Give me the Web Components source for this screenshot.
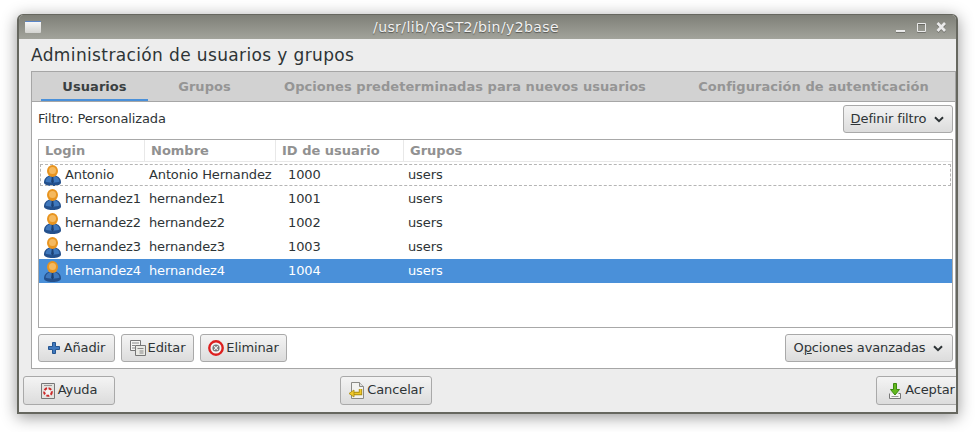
<!DOCTYPE html>
<html>
<head>
<meta charset="utf-8">
<style>
  html, body { margin: 0; background: #fff; height: 432px; overflow: hidden; }
  body { font: 13px "DejaVu Sans", sans-serif; color: #2e3436; }
</style>
</head>
<body>
<yast-window>
  <span slot="title">/usr/lib/YaST2/bin/y2base</span>
  <user-panel></user-panel>
</yast-window>

<script>
const ICONS = {
  user: `<svg width="17" height="21" viewBox="0 0 17 21">
    <path d="M0 17.500c0-4 2.500-6 5.500-7h6c3 1 5.500 3 5.500 7 0 2-3.500 3.500-8.500 3.500S0 19.500 0 17.500z" fill="#24508c"/>
    <path d="M1.500 16.500c0-2.500 2-4.500 4.500-5.500h5c2.500 1 4.500 3 4.500 5.500-1.500 1.500-12.500 1.500-14 0z" fill="#3f78bd"/>
    <path d="M6.800 10.500h3.400l-.9 2 .6 4.500-1.400 1.500L7.100 17l.6-4.500z" fill="#1c4174"/>
    <ellipse cx="8.500" cy="6" rx="5.500" ry="6" fill="#e8941f"/>
    <circle cx="8.500" cy="5.500" r="3.500" fill="#f5b95f"/>
  </svg>`,
  add: `<svg width="12" height="12" viewBox="0 0 12 12">
    <path d="M4.500.500h3v4h4v3h-4v4h-3v-4h-4v-3h4z" fill="#3f78bd" stroke="#255590" stroke-linejoin="round"/>
  </svg>`,
  edit: `<svg width="16" height="16" viewBox="0 0 16 16">
    <path d="M.5.500h10v10H.5z" fill="#f6f6f4" stroke="#777"/>
    <path d="M5.500 5.500h10v10h-10z" fill="#e9e9e4" stroke="#777"/>
    <path d="M2 3h7M2 5.500h3M2 8h3M7.500 8.500h6M9.500 11h4M9.500 13h4" stroke="#888"/>
  </svg>`,
  remove: `<svg width="16" height="16" viewBox="0 0 16 16">
    <circle cx="8" cy="8" r="6.700" fill="#f2f2f2" stroke="#dd1f1f" stroke-width="2.400"/>
    <circle cx="8" cy="8" r="3.600" fill="#777"/>
    <path d="M6.200 6.200l3.600 3.600M9.800 6.200l-3.600 3.600" stroke="#f2f2f2" stroke-width="1.200"/>
  </svg>`,
  help: `<svg width="14" height="16" viewBox="0 0 14 16">
    <path d="M.5.500h13v15H.5z" fill="#e4e4e0" stroke="#777"/>
    <path d="M3 2.500h8" stroke="#999"/>
    <circle cx="7" cy="9" r="3.800" fill="#f5f5f5" stroke="#cc2a2a" stroke-width="2" stroke-dasharray="3 1.500"/>
  </svg>`,
  cancel: `<svg width="16" height="17" viewBox="0 0 16 17">
    <path d="M3.500.500h8l4 4v12h-12z" fill="#f2f2ef" stroke="#8a8a86"/>
    <path d="M11.500.500v4h4" fill="#ddd" stroke="#8a8a86"/>
    <path d="M12.500 7v4.500H5" fill="none" stroke="#a88a12" stroke-width="3.400"/>
    <path d="M12.500 7v4.500H5" fill="none" stroke="#f0c92a" stroke-width="1.600"/>
    <path d="M6 8L1 11.500 6 15z" fill="#f0c92a" stroke="#a88a12" stroke-width=".8"/>
  </svg>`,
  accept: `<svg width="12" height="16" viewBox="0 0 12 16">
    <path d="M.5 10.500v5h11v-5h-2" fill="#f5f5f2" stroke="#777"/>
    <path d="M2.500 13.500h7" stroke="#999"/>
    <path d="M4.500.500h3v6h3L6 12 1.500 6.500h3z" fill="#62b81e" stroke="#3d8a10" stroke-linejoin="round"/>
  </svg>`,
  chevron: `<svg width="10" height="7" viewBox="0 0 10 7">
    <path d="M1 1.200l4 4 4-4" fill="none" stroke="#2e3436" stroke-width="2"/>
  </svg>`
};

class YastWindow extends HTMLElement {
  constructor() {
    super();
    this.attachShadow({ mode: "open" });
    this.shadowRoot.innerHTML = `
    <style>
      :host { display: block; padding: 14px 0 0 17px; }
      .win {
        width: 941px;
        height: 400px;
        box-sizing: border-box;
        display: flex;
        flex-direction: column;
        border: solid #66675f;
        border-width: 1px 2px 2px 2px;
        border-radius: 6px 6px 0 0;
        background: #ededed;
        box-shadow: 0 3px 16px rgba(0,0,0,.42);
        overflow: hidden;
      }
      .title {
        height: 24px;
        flex: none;
        display: flex;
        align-items: center;
        background: linear-gradient(#7e7f77, #a2a39b);
      }
      .app {
        width: 16px;
        height: 12px;
        margin: 0 0 0 6px;
        border-radius: 1px;
        background: linear-gradient(#f7f7f7, #d3d3d0);
        border-top: 1px solid #5b86c9;
        box-sizing: border-box;
        flex: none;
      }
      .text {
        flex: 1;
        text-align: center;
        color: #f2f2f2;
        font-size: 14px;
        margin-right: 4px;
        letter-spacing: .4px;
        text-shadow: 0 1px 1px rgba(0,0,0,.45);
      }
      .ctl { display: block; margin-right: 9px; flex: none; filter: drop-shadow(0 1px 0 rgba(0,0,0,.25)); }
    </style>
    <div class="win">
      <div class="title">
        <div class="app"></div>
        <div class="text"><slot name="title"></slot></div>
        <svg class="ctl" width="52" height="12" viewBox="0 0 52 12">
          <path d="M1 10h9" stroke="#eaeaea" stroke-width="2"/>
          <path d="M22.500 2.500h8v8h-8z" fill="none" stroke="#eaeaea"/>
          <path d="M42.500 2l7.500 8M50 2l-7.500 8" stroke="#eaeaea" stroke-width="2.600"/>
        </svg>
      </div>
      <slot></slot>
    </div>`;
  }
}

class YastButton extends HTMLElement {
  constructor() {
    super();
    this.attachShadow({ mode: "open" });
    const icon = this.getAttribute("icon");
    const menu = this.hasAttribute("menu");
    const gap = this.getAttribute("gap") || 0;
    this.shadowRoot.innerHTML = `
    <style>
      :host { display: inline-block; flex: none; }
      button {
        all: unset;
        box-sizing: border-box;
        display: flex;
        align-items: center;
        justify-content: center;
        width: var(--w, auto);
        height: var(--h, 28px);
        border: 1px solid #a9a9a9;
        border-radius: 3px;
        background: linear-gradient(#f4f4f4, #dcdcdc);
        font: 13px "DejaVu Sans", sans-serif;
        letter-spacing: -.12px;
        color: #2e3436;
        white-space: nowrap;
      }
      svg { display: block; flex: none; }
      .label { margin-left: ${gap}px; padding-bottom: var(--pb, 1px); }
      .chev { margin: 0 1px 0 8px; }
    </style>
    <button>${icon ? ICONS[icon] : ""}<span class="label"><slot></slot></span>${menu ? `<span class="chev">${ICONS.chevron}</span>` : ""}</button>`;
  }
}

class UserRow extends HTMLElement {
  constructor() {
    super();
    this.attachShadow({ mode: "open" });
    const [login, name, id, group] = this.getAttribute("cells").split("|");
    this.shadowRoot.innerHTML = `
    <style>
      :host {
        display: grid;
        grid-template-columns: 110px 139px 120px 1fr;
        height: 24px;
        align-items: center;
        box-sizing: border-box;
        color: #2e3436;
        letter-spacing: -.12px;
      }
      :host([selected]) { background: #4a90d9; color: #fff; }
      :host([focused]) { outline: 1px dashed #b5b5b5; outline-offset: -2px; }
      .login { display: flex; align-items: center; gap: 4px; padding-left: 5px; }
      svg { display: block; flex: none; }
      .cell { white-space: nowrap; }
      .txt { padding-bottom: 2px; display: block; }
    </style>
    <div class="cell login">${ICONS.user}<span class="txt">${login}</span></div>
    <div class="cell"><span class="txt">${name}</span></div>
    <div class="cell"><span class="txt">${id}</span></div>
    <div class="cell"><span class="txt">${group}</span></div>`;
  }
}

class UserTable extends HTMLElement {
  constructor() {
    super();
    this.attachShadow({ mode: "open" });
    this.shadowRoot.innerHTML = `
    <style>
      :host {
        display: block;
        height: 189px;
        flex: none;
        box-sizing: border-box;
        border: 1px solid #a8a8a8;
        background: #fff;
        overflow: hidden;
      }
      .head {
        display: grid;
        grid-template-columns: 106px 131px 128px 1fr;
        height: 22px;
        margin-bottom: 1px;
        border-bottom: 1px solid #e8e8e8;
        box-sizing: border-box;
        font-weight: bold;
        color: #919191;
      }
      .head div {
        padding-left: 6px;
        line-height: 21px;
        border-right: 1px solid #e8e8e8;
      }
      .head div:last-child { border-right: 0; }
    </style>
    <div class="head"><div>Login</div><div>Nombre</div><div>ID de usuario</div><div>Grupos</div></div>
    <slot></slot>`;
  }
}

class UserPanel extends HTMLElement {
  constructor() {
    super();
    this.attachShadow({ mode: "open" });
    this.shadowRoot.innerHTML = `
    <style>
      :host { display: flex; flex-direction: column; flex: 1; min-height: 0; padding-left: 12px; }
      h1 {
        margin: 0;
        height: 32px;
        font: 17px/32px "DejaVu Sans", sans-serif;
        letter-spacing: .37px;
        color: #2e3436;
      }
      .panel {
        width: 925px;
        height: 298px;
        flex: none;
        box-sizing: border-box;
        border: 1px solid #a6a6a6;
        background: #fff;
        display: flex;
        flex-direction: column;
      }
      .tabs {
        display: flex;
        height: 29px;
        flex: none;
        background: #d2d2d2;
        border-bottom: 1px solid #a6a6a6;
        font-weight: bold;
        color: #959595;
        padding-left: 9px;
        letter-spacing: .05px;
        overflow: hidden;
      }
      .tab { height: 29px; line-height: 29px; text-align: center; white-space: nowrap; flex: none; }
      .tab.on { color: #3a3f41; box-sizing: border-box; border-bottom: 2px solid #4a90d9; }
      .content { flex: 1; display: flex; flex-direction: column; padding: 3px 2px 0 6px; min-height: 0; }
      .filter { display: flex; justify-content: space-between; align-items: center; height: 28px; flex: none; margin-bottom: 6px; }
      .filter .lbl { letter-spacing: -.12px; padding-bottom: 2px; }
      .actions { display: flex; gap: 6px; margin-top: 6px; }
      .grow { flex: 1; }
      .foot { display: flex; margin: 7px 0 0 -8px; --h: 29px; --w: 92px; --pb: 3px; }
    </style>
    <h1>Administración de usuarios y grupos</h1>
    <div class="panel">
      <div class="tabs">
        <div class="tab on" style="width:107px">Usuarios</div>
        <div class="tab" style="width:113px">Grupos</div>
        <div class="tab" style="width:408px">Opciones predeterminadas para nuevos usuarios</div>
        <div class="tab" style="width:289px">Configuración de autenticación</div>
      </div>
      <div class="content">
        <div class="filter">
          <span class="lbl">Filtro: Personalizada</span>
          <yast-button menu style="--w:110px"><u>D</u>efinir filtro</yast-button>
        </div>
        <user-table>
          <user-row focused cells="Antonio|Antonio Hernandez|1000|users"></user-row>
          <user-row cells="hernandez1|hernandez1|1001|users"></user-row>
          <user-row cells="hernandez2|hernandez2|1002|users"></user-row>
          <user-row cells="hernandez3|hernandez3|1003|users"></user-row>
          <user-row selected cells="hernandez4|hernandez4|1004|users"></user-row>
        </user-table>
        <div class="actions">
          <yast-button icon="add" gap="4" style="--w:77px">Añadir</yast-button>
          <yast-button icon="edit" gap="2" style="--w:73px">Editar</yast-button>
          <yast-button icon="remove" gap="2" style="--w:87px">Eliminar</yast-button>
          <span class="grow"></span>
          <yast-button menu style="--w:168px">O<u>p</u>ciones avanzadas</yast-button>
        </div>
      </div>
    </div>
    <div class="foot">
      <yast-button icon="help" gap="3">Ayuda</yast-button>
      <yast-button icon="cancel" gap="3" style="margin-left:225px">Cancelar</yast-button>
      <yast-button icon="accept" gap="4" style="margin-left:444px">Aceptar</yast-button>
    </div>`;
  }
}

customElements.define("yast-window", YastWindow);
customElements.define("yast-button", YastButton);
customElements.define("user-row", UserRow);
customElements.define("user-table", UserTable);
customElements.define("user-panel", UserPanel);
</script>
</body>
</html>
